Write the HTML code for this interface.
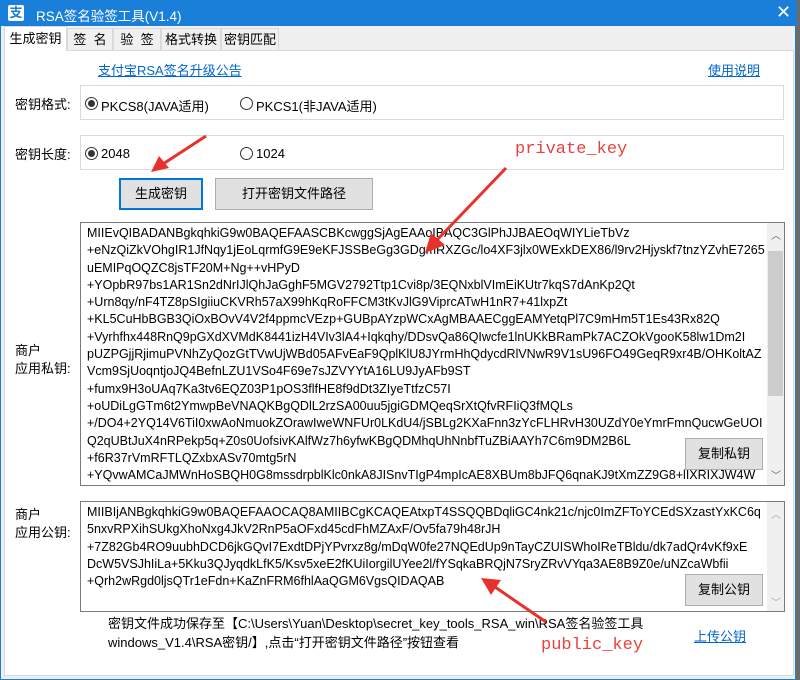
<!DOCTYPE html>
<html><head><meta charset="utf-8"><style>
*{margin:0;padding:0;box-sizing:border-box}
body{width:800px;height:680px;background:#6b6b6b;position:relative;overflow:hidden;font-family:"Liberation Sans","Noto Sans CJK SC",sans-serif;font-size:13px;color:#000}
.a{position:absolute;white-space:nowrap}
.win{position:absolute;left:0;top:0;width:796px;height:680px;background:#f0f0f0;border:1px solid #1a7fd8;border-top:none}
.title{position:absolute;left:0;top:0;width:796px;height:26px;background:#1a7fd8;color:#fff}
.panel{position:absolute;left:3px;top:50px;width:790px;height:626px;background:#fff;border:1px solid #d9d9d9}
.tab{position:absolute;top:28px;height:22px;border:1px solid #d9d9d9;border-bottom:none;background:#f0f0f0;text-align:center;line-height:21px;font-size:13px}
.box{position:absolute;border:1px solid #dadada;background:#fff}
.radio{position:absolute;width:13px;height:13px;border:1px solid #333;border-radius:50%;background:#fff}
.radio.on::after{content:"";position:absolute;left:2px;top:2px;width:7px;height:7px;border-radius:50%;background:#333}
.btn{position:absolute;background:#e1e1e1;border:1px solid #adadad;text-align:center;font-size:13px}
.link{color:#0066cc;text-decoration:underline}
.ta{position:absolute;border:1px solid #7a7a7a;background:#fff;overflow:hidden}
.ta pre{position:absolute;left:6px;font-family:"Liberation Sans","Noto Sans CJK SC",sans-serif;font-size:12.5px;line-height:17.3px}
.sb{position:absolute;right:0;top:0;width:17px;height:100%;background:#f0f0f0}
.red{color:#e8413e;font-family:"Liberation Mono",monospace;font-size:17px}
</style></head><body>
<div class="win">
<div class="title">
 <div class="a" style="left:7px;top:5px;width:16px;height:16px;background:#fff;border-radius:2px;color:#1a7fd8;font-size:13px;line-height:16px;text-align:center;font-weight:bold">支</div>
 <div class="a" style="left:35px;top:5px;font-size:13.5px">RSA签名验签工具(V1.4)</div>
 <div class="a" style="left:775px;top:2px;font-size:18px">✕</div>
</div>
<div class="tab" style="left:3px;width:63px;top:26px;height:25px;background:#fff;z-index:2;line-height:24px">生成密钥</div>
<div class="tab" style="left:66px;width:46px">签&nbsp;&nbsp;名</div>
<div class="tab" style="left:112px;width:48px">验&nbsp;&nbsp;签</div>
<div class="tab" style="left:160px;width:60px">格式转换</div>
<div class="tab" style="left:220px;width:58px">密钥匹配</div>
<div class="panel"></div>

<div class="a link" style="left:97px;top:60px">支付宝RSA签名升级公告</div>
<div class="a link" style="left:707px;top:60px">使用说明</div>

<div class="a" style="left:14px;top:94px">密钥格式:</div>
<div class="box" style="left:79px;top:85px;width:704px;height:35px"></div>
<div class="radio on" style="left:84px;top:97px"></div>
<div class="a" style="left:100px;top:96px">PKCS8(JAVA适用)</div>
<div class="radio" style="left:239px;top:97px"></div>
<div class="a" style="left:255px;top:96px">PKCS1(非JAVA适用)</div>

<div class="a" style="left:14px;top:144px">密钥长度:</div>
<div class="box" style="left:79px;top:135px;width:704px;height:35px"></div>
<div class="radio on" style="left:84px;top:147px"></div>
<div class="a" style="left:100px;top:146px">2048</div>
<div class="radio" style="left:239px;top:147px"></div>
<div class="a" style="left:255px;top:146px">1024</div>

<div class="btn" style="left:118px;top:178px;width:84px;height:32px;border:2px solid #0078d7;line-height:28px">生成密钥</div>
<div class="btn" style="left:214px;top:178px;width:158px;height:32px;line-height:30px">打开密钥文件路径</div>

<div class="a" style="left:14px;top:342px;line-height:18px">商户<br>应用私钥:</div>
<div class="ta" style="left:79px;top:222px;width:705px;height:264px">
<pre style="top:2px">MIIEvQIBADANBgkqhkiG9w0BAQEFAASCBKcwggSjAgEAAoIBAQC3GlPhJJBAEOqWIYLieTbVz
+eNzQiZkVOhgIR1JfNqy1jEoLqrmfG9E9eKFJSSBeGg3GDgmRXZGc/lo4XF3jlx0WExkDEX86/l9rv2Hjyskf7tnzYZvhE7265
uEMIPqOQZC8jsTF20M+Ng++vHPyD
+YOpbR97bs1AR1Sn2dNrIJlQhJaGghF5MGV2792Ttp1Cvi8p/3EQNxblVImEiKUtr7kqS7dAnKp2Qt
+Urn8qy/nF4TZ8pSIgiiuCKVRh57aX99hKqRoFFCM3tKvJlG9ViprcATwH1nR7+41lxpZt
+KL5CuHbBGB3QiOxBOvV4V2f4ppmcVEzp+GUBpAYzpWCxAgMBAAECggEAMYetqPl7C9mHm5T1Es43Rx82Q
+Vyrhfhx448RnQ9pGXdXVMdK8441izH4VIv3lA4+Iqkqhy/DDsvQa86QIwcfe1lnUKkBRamPk7ACZOkVgooK58lw1Dm2I
pUZPGjjRjimuPVNhZyQozGtTVwUjWBd05AFvEaF9QplKlU8JYrmHhQdycdRlVNwR9V1sU96FO49GeqR9xr4B/OHKoltAZ
Vcm9SjUoqntjoJQ4BefnLZU1VSo4F69e7sJZVYYtA16LU9JyAFb9ST
+fumx9H3oUAq7Ka3tv6EQZ03P1pOS3flfHE8f9dDt3ZIyeTtfzC57I
+oUDiLgGTm6t2YmwpBeVNAQKBgQDlL2rzSA00uu5jgiGDMQeqSrXtQfvRFIiQ3fMQLs
+/DO4+2YQ14V6TiI0xwAoNmuokZOrawIweWNFUr0LKdU4/jSBLg2KXaFnn3zYcFLHRvH30UZdY0eYmrFmnQucwGeUOI
Q2qUBtJuX4nRPekp5q+Z0s0UofsivKAlfWz7h6yfwKBgQDMhqUhNnbfTuZBiAAYh7C6m9DM2B6L
+f6R37rVmRFTLQZxbxASv70mtg5rN
+YQvwAMCaJMWnHoSBQH0G8mssdrpblKlc0nkA8JISnvTIgP4mpIcAE8XBUm8bJFQ6qnaKJ9tXmZZ9G8+lIXRIXJW4W</pre>
<div class="sb"><div class="a" style="left:4px;top:4px;font-size:10px;color:#606060">︿</div><div class="a" style="left:1px;top:28px;width:15px;height:145px;background:#cdcdcd"></div><div class="a" style="left:4px;top:244px;font-size:10px;color:#606060">﹀</div></div>
</div>
<div class="btn" style="left:684px;top:438px;width:78px;height:32px;line-height:30px">复制私钥</div>

<div class="a" style="left:14px;top:506px;line-height:18px">商户<br>应用公钥:</div>
<div class="ta" style="left:79px;top:501px;width:705px;height:111px">
<pre style="top:2px">MIIBIjANBgkqhkiG9w0BAQEFAAOCAQ8AMIIBCgKCAQEAtxpT4SSQQBDqliGC4nk21c/njc0ImZFToYCEdSXzastYxKC6q
5nxvRPXihSUkgXhoNxg4JkV2RnP5aOFxd45cdFhMZAxF/Ov5fa79h48rJH
+7Z82Gb4RO9uubhDCD6jkGQvI7ExdtDPjYPvrxz8g/mDqW0fe27NQEdUp9nTayCZUISWhoIReTBldu/dk7adQr4vKf9xE
DcW5VSJhIiLa+5Kku3QJyqdkLfK5/Ksv5xeE2fKUiIorgilUYee2l/fYSqkaBRQjN7SryZRvVYqa3AE8B9Z0e/uNZcaWbfii
+Qrh2wRgd0ljsQTr1eFdn+KaZnFRM6fhlAaQGM6VgsQIDAQAB</pre>
<div class="sb"><div class="a" style="left:4px;top:4px;font-size:10px;color:#a0a0a0">︿</div><div class="a" style="left:4px;top:92px;font-size:10px;color:#a0a0a0">﹀</div></div>
</div>
<div class="btn" style="left:684px;top:574px;width:78px;height:32px;line-height:30px">复制公钥</div>

<div class="a" style="left:107px;top:614px;line-height:19px">密钥文件成功保存至【C:\Users\Yuan\Desktop\secret_key_tools_RSA_win\RSA签名验签工具<br>windows_V1.4\RSA密钥/】,点击“打开密钥文件路径”按钮查看</div>
<div class="a link" style="left:693px;top:626px">上传公钥</div>

<div class="a red" style="left:514px;top:140px">private_key</div>
<div class="a red" style="left:540px;top:636px">public_key</div>
<svg class="a" style="left:0;top:0" width="800" height="680">
<g fill="#e8302c" stroke="#e8302c">
<line x1="205" y1="136" x2="162" y2="164" stroke-width="3"/>
<polygon points="150,172 158,156 168,168" stroke="none"/>
<line x1="505" y1="168" x2="436" y2="240" stroke-width="3"/>
<polygon points="424,253 430,233 444,245" stroke="none"/>
<line x1="545" y1="622" x2="494" y2="587" stroke-width="3"/>
<polygon points="480,578 500,580 490,595" stroke="none"/>
</g></svg>
</div>
</body></html>
